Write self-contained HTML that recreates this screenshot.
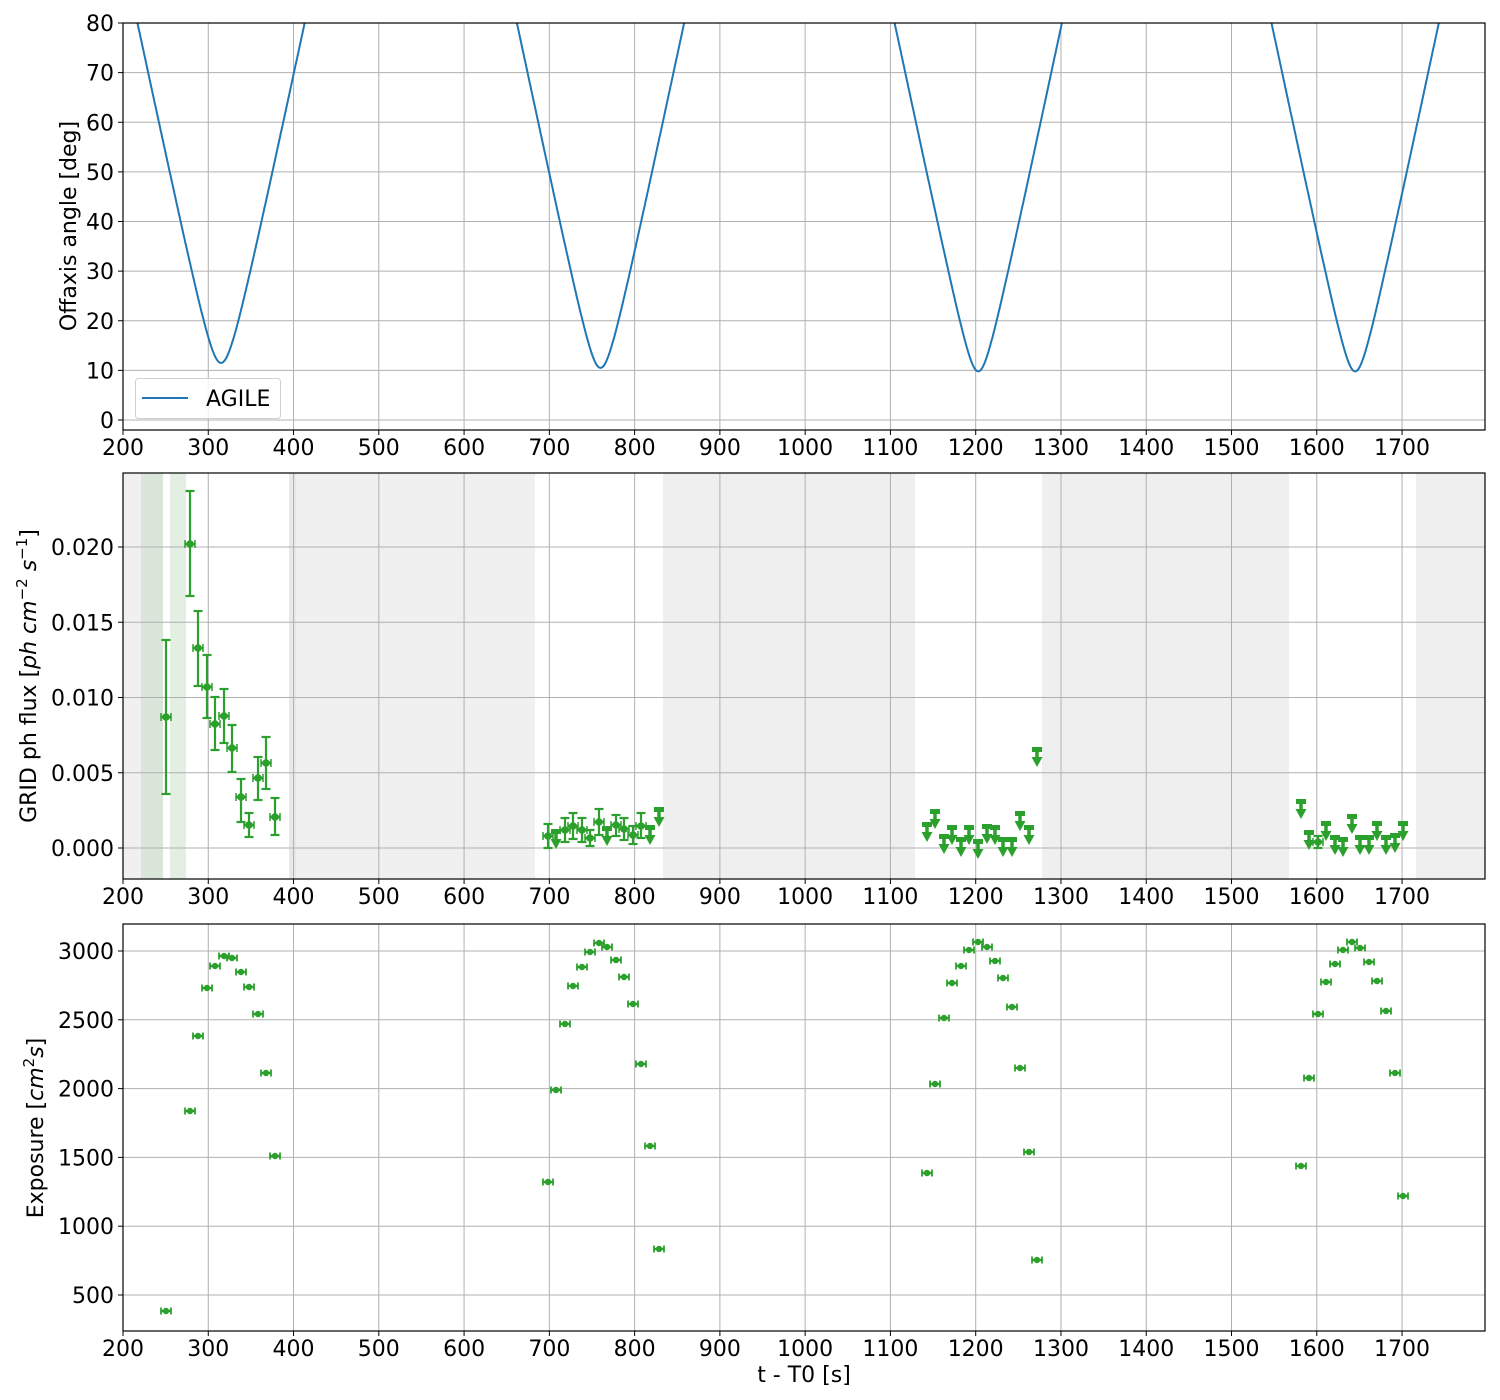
<!DOCTYPE html>
<html><head><meta charset="utf-8"><style>
html,body{margin:0;padding:0;background:#fff}
svg{display:block;font-family:"DejaVu Sans","Liberation Sans",sans-serif}
</style></head><body>
<svg id="s" width="1500" height="1400" xmlns="http://www.w3.org/2000/svg"></svg>
<script>
const S=document.getElementById('s');let h='';
const L=123,R=1485;
const X=t=>123+(t-200)*0.8527;
const G='#2ca02c';
const FS=22;
function panel(top,bot,ticks,yf){
  for(let t=200;t<=1700;t+=100){const x=X(t);h+=`<line x1="${x}" y1="${top}" x2="${x}" y2="${bot}" stroke="#b0b0b0" stroke-width="1"/>`;}
  ticks.forEach(v=>{const y=yf(v);h+=`<line x1="${L}" y1="${y}" x2="${R}" y2="${y}" stroke="#b0b0b0" stroke-width="1"/>`;});
}
function frame(top,bot,ticks,yf,fmt){
  h+=`<rect x="${L}" y="${top}" width="${R-L}" height="${bot-top}" fill="none" stroke="#000" stroke-width="1.2"/>`;
  for(let t=200;t<=1700;t+=100){const x=X(t);h+=`<line x1="${x}" y1="${bot}" x2="${x}" y2="${bot+5}" stroke="#000"/><text x="${x}" y="${bot+25}" font-size="${FS}" text-anchor="middle">${t}</text>`;}
  ticks.forEach(v=>{const y=yf(v);h+=`<line x1="${L-5}" y1="${y}" x2="${L}" y2="${y}" stroke="#000"/><text x="${L-9}" y="${y+8}" font-size="${FS}" text-anchor="end">${fmt(v)}</text>`;});
}
const Y1=v=>420-v*4.9625;
const t1=[0,10,20,30,40,50,60,70,80];
panel(23,430,t1,Y1);
let d='';const mins=[[315,11.5],[760,10.5],[1203,9.8],[1645,9.8]];
const w=0.814*Math.PI/180;
let started=false;
for(let t=200;t<=1797;t+=1){
  let best=null;
  for(const [t0,m] of mins){const dt=t-t0;if(Math.abs(dt)<221){const c=Math.cos(m*Math.PI/180)*Math.cos(w*dt);best=Math.acos(c)*180/Math.PI;}}
  if(best===null||best>80.5){started=false;continue;}
  d+=(started?'L':'M')+X(t).toFixed(1)+','+Y1(best).toFixed(1);started=true;
}
h+=`<clipPath id="c1"><rect x="${L}" y="23" width="${R-L}" height="407"/></clipPath>`;
h+=`<path d="${d}" fill="none" stroke="#1f77b4" stroke-width="2" clip-path="url(#c1)"/>`;
frame(23,430,t1,Y1,v=>v);
h+=`<rect x="135.5" y="378.5" width="145" height="40" rx="3" fill="#fff" fill-opacity="0.8" stroke="#d0d0d0"/>`;
h+=`<line x1="142" y1="398" x2="188" y2="398" stroke="#1f77b4" stroke-width="2"/><text x="206" y="406" font-size="${FS}">AGILE</text>`;
h+=`<text transform="translate(76,226) rotate(-90)" font-size="${FS}" text-anchor="middle">Offaxis angle [deg]</text>`;
const Y2=v=>848-v*15050;
const t2=[0,0.005,0.01,0.015,0.02];
[[123,141,'#f0f0f0'],[141,163,'#dbe6da'],[170,186,'#e3efe2'],[289,296,'#e8e8e8'],[296,535,'#f0f0f0'],[663,915,'#efefef'],[1042,1289,'#efefef'],[1416,1485,'#efefef']]
.forEach(([a,b,c])=>h+=`<rect x="${a}" y="473" width="${b-a}" height="406" fill="${c}"/>`);
panel(473,879,t2,Y2);
const eb=[[166,717,640,794],[190,544,491,596],[198,648,611,686],[207,687,655,718],[215,724,697,750],[224,716,689,743],[232,748,725,772],[241,797,779,822],[249,825,813,837],[258,778,757,800],[266,763,737,789],[275,817,798,835],
[548,836,824,848],[565,830,818,842],[573,826,813,839],[582,830,818,842],[590,838,830,846],[599,822,809,835],[616,825,815,836],[624,829,818,840],[633,835,826,844],[641,826,813,838],[1318,842,836,848]];
eb.forEach(([x,y,a,b])=>{h+=`<line x1="${x}" y1="${a}" x2="${x}" y2="${b}" stroke="${G}" stroke-width="2.2"/><line x1="${x-4.5}" y1="${a}" x2="${x+4.5}" y2="${a}" stroke="${G}" stroke-width="2.2"/><line x1="${x-4.5}" y1="${b}" x2="${x+4.5}" y2="${b}" stroke="${G}" stroke-width="2.2"/><line x1="${x-5}" y1="${y}" x2="${x+5}" y2="${y}" stroke="${G}" stroke-width="3"/><line x1="${x-5}" y1="${y-4}" x2="${x-5}" y2="${y+4}" stroke="${G}" stroke-width="1.5"/><line x1="${x+5}" y1="${y-4}" x2="${x+5}" y2="${y+4}" stroke="${G}" stroke-width="1.5"/><circle cx="${x}" cy="${y}" r="3.8" fill="${G}"/>`;});
const ul=[[556,830],[607,827],[650,826],[659,808],[927,823],[935,810],[944,835],[952,826],[961,838],[969,826],[978,840],[987,825],[995,826],[1003,838],[1012,838],[1020,812],[1029,826],[1037,748],
[1301,800],[1309,831],[1326,822],[1335,836],[1343,838],[1352,815],[1360,836],[1369,836],[1377,822],[1386,836],[1395,834],[1403,822]];
ul.forEach(([x,y])=>{h+=`<rect x="${x-5}" y="${y-1}" width="10" height="5" fill="${G}"/><line x1="${x}" y1="${y}" x2="${x}" y2="${y+12}" stroke="${G}" stroke-width="3.5"/><path d="M${x-5.5},${y+9}L${x+5.5},${y+9}L${x},${y+19}Z" fill="${G}"/>`;});
frame(473,879,t2,Y2,v=>v.toFixed(3));
h+=`<text transform="translate(36,676) rotate(-90)" font-size="${FS}" text-anchor="middle">GRID ph flux [<tspan font-style="italic">ph cm</tspan><tspan font-size="15" dy="-9">−2</tspan><tspan dy="9" font-style="italic"> s</tspan><tspan font-size="15" dy="-9">−1</tspan><tspan dy="9">]</tspan></text>`;
const Y3=v=>1295-(v-500)*0.1376;
const t3=[500,1000,1500,2000,2500,3000];
panel(924,1331,t3,Y3);
const pts=[[166,1311],[190,1111],[198,1036],[207,988],[215,966],[224,956],[232,958],[241,972],[249,987],[258,1014],[266,1073],[275,1156],
[548,1182],[556,1090],[565,1024],[573,986],[582,967],[590,952],[599,943],[607,947],[616,960],[624,977],[633,1004],[641,1064],[650,1146],[659,1249],
[927,1173],[935,1084],[944,1018],[952,983],[961,966],[969,950],[978,942],[987,947],[995,961],[1003,978],[1012,1007],[1020,1068],[1029,1152],[1037,1260],
[1301,1166],[1309,1078],[1318,1014],[1326,982],[1335,964],[1343,950],[1352,942],[1360,948],[1369,962],[1377,981],[1386,1011],[1395,1073],[1403,1196]];
pts.forEach(([x,y])=>{h+=`<line x1="${x-5}" y1="${y}" x2="${x+5}" y2="${y}" stroke="${G}" stroke-width="2.5"/><line x1="${x-5}" y1="${y-3.5}" x2="${x-5}" y2="${y+3.5}" stroke="${G}" stroke-width="1.8"/><line x1="${x+5}" y1="${y-3.5}" x2="${x+5}" y2="${y+3.5}" stroke="${G}" stroke-width="1.8"/><circle cx="${x}" cy="${y}" r="3.2" fill="${G}"/>`;});
frame(924,1331,t3,Y3,v=>v);
h+=`<text transform="translate(43,1128) rotate(-90)" font-size="${FS}" text-anchor="middle">Exposure [<tspan font-style="italic">cm</tspan><tspan font-size="15" dy="-9">2</tspan><tspan dy="9" font-style="italic">s</tspan>]</text>`;
h+=`<text x="804" y="1382" font-size="${FS}" text-anchor="middle">t - T0 [s]</text>`;
S.innerHTML=h;
</script>
</body></html>
